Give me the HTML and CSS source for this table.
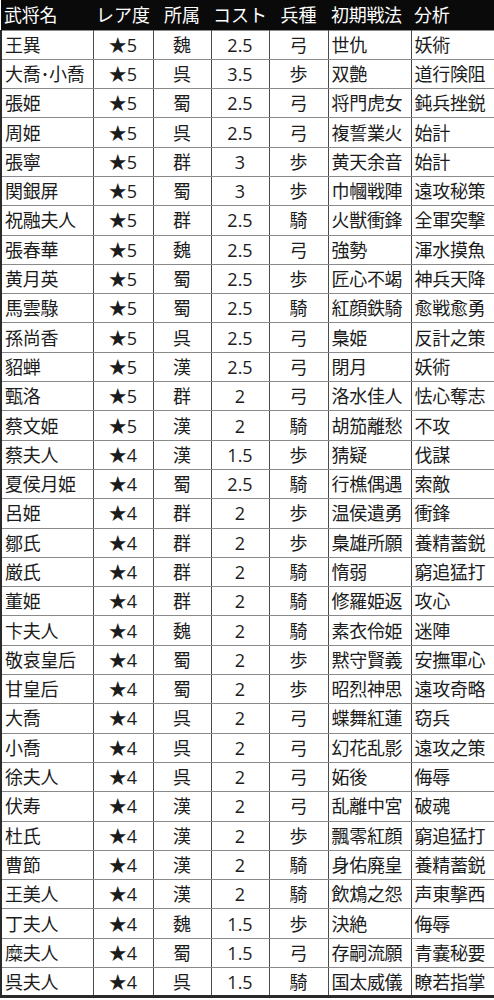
FILE: index.html
```html
<!DOCTYPE html>
<html lang="ja">
<head>
<meta charset="utf-8">
<link rel="stylesheet" href="styles.css">
</head>
<body>
<table class="tbl">
<colgroup>
<col class="c1"><col class="c2"><col class="c3"><col class="c4"><col class="c5"><col class="c6"><col class="c7">
</colgroup>
<thead>
<tr class="head"><th class="l">武将名</th><th>レア度</th><th>所属</th><th>コスト</th><th>兵種</th><th class="l">初期戦法</th><th class="l">分析</th></tr>
</thead>
<tbody>
<tr><td class="l">王異</td><td>★5</td><td>魏</td><td>2.5</td><td>弓</td><td class="l">世仇</td><td class="l">妖術</td></tr>
<tr><td class="l">大喬･小喬</td><td>★5</td><td>呉</td><td>3.5</td><td>歩</td><td class="l">双艶</td><td class="l">道行険阻</td></tr>
<tr><td class="l">張姫</td><td>★5</td><td>蜀</td><td>2.5</td><td>弓</td><td class="l">将門虎女</td><td class="l">鈍兵挫鋭</td></tr>
<tr><td class="l">周姫</td><td>★5</td><td>呉</td><td>2.5</td><td>弓</td><td class="l">複誓業火</td><td class="l">始計</td></tr>
<tr><td class="l">張寧</td><td>★5</td><td>群</td><td>3</td><td>歩</td><td class="l">黄天余音</td><td class="l">始計</td></tr>
<tr><td class="l">関銀屏</td><td>★5</td><td>蜀</td><td>3</td><td>歩</td><td class="l">巾幗戦陣</td><td class="l">遠攻秘策</td></tr>
<tr><td class="l">祝融夫人</td><td>★5</td><td>群</td><td>2.5</td><td>騎</td><td class="l">火獣衝鋒</td><td class="l">全軍突撃</td></tr>
<tr><td class="l">張春華</td><td>★5</td><td>魏</td><td>2.5</td><td>弓</td><td class="l">強勢</td><td class="l">渾水摸魚</td></tr>
<tr><td class="l">黄月英</td><td>★5</td><td>蜀</td><td>2.5</td><td>歩</td><td class="l">匠心不竭</td><td class="l">神兵天降</td></tr>
<tr><td class="l">馬雲騄</td><td>★5</td><td>蜀</td><td>2.5</td><td>騎</td><td class="l">紅顔鉄騎</td><td class="l">愈戦愈勇</td></tr>
<tr><td class="l">孫尚香</td><td>★5</td><td>呉</td><td>2.5</td><td>弓</td><td class="l">梟姫</td><td class="l">反計之策</td></tr>
<tr><td class="l">貂蝉</td><td>★5</td><td>漢</td><td>2.5</td><td>弓</td><td class="l">閉月</td><td class="l">妖術</td></tr>
<tr><td class="l">甄洛</td><td>★5</td><td>群</td><td>2</td><td>弓</td><td class="l">洛水佳人</td><td class="l">怯心奪志</td></tr>
<tr><td class="l">蔡文姫</td><td>★5</td><td>漢</td><td>2</td><td>騎</td><td class="l">胡笳離愁</td><td class="l">不攻</td></tr>
<tr><td class="l">蔡夫人</td><td>★4</td><td>漢</td><td>1.5</td><td>歩</td><td class="l">猜疑</td><td class="l">伐謀</td></tr>
<tr><td class="l">夏侯月姫</td><td>★4</td><td>蜀</td><td>2.5</td><td>騎</td><td class="l">行樵偶遇</td><td class="l">索敵</td></tr>
<tr><td class="l">呂姫</td><td>★4</td><td>群</td><td>2</td><td>歩</td><td class="l">温侯遺勇</td><td class="l">衝鋒</td></tr>
<tr><td class="l">鄒氏</td><td>★4</td><td>群</td><td>2</td><td>歩</td><td class="l">梟雄所願</td><td class="l">養精蓄鋭</td></tr>
<tr><td class="l">厳氏</td><td>★4</td><td>群</td><td>2</td><td>騎</td><td class="l">惰弱</td><td class="l">窮追猛打</td></tr>
<tr><td class="l">董姫</td><td>★4</td><td>群</td><td>2</td><td>騎</td><td class="l">修羅姫返</td><td class="l">攻心</td></tr>
<tr><td class="l">卞夫人</td><td>★4</td><td>魏</td><td>2</td><td>騎</td><td class="l">素衣伶姫</td><td class="l">迷陣</td></tr>
<tr><td class="l">敬哀皇后</td><td>★4</td><td>蜀</td><td>2</td><td>歩</td><td class="l">黙守賢義</td><td class="l">安撫軍心</td></tr>
<tr><td class="l">甘皇后</td><td>★4</td><td>蜀</td><td>2</td><td>歩</td><td class="l">昭烈神思</td><td class="l">遠攻奇略</td></tr>
<tr><td class="l">大喬</td><td>★4</td><td>呉</td><td>2</td><td>弓</td><td class="l">蝶舞紅蓮</td><td class="l">窃兵</td></tr>
<tr><td class="l">小喬</td><td>★4</td><td>呉</td><td>2</td><td>弓</td><td class="l">幻花乱影</td><td class="l">遠攻之策</td></tr>
<tr><td class="l">徐夫人</td><td>★4</td><td>呉</td><td>2</td><td>弓</td><td class="l">妬後</td><td class="l">侮辱</td></tr>
<tr><td class="l">伏寿</td><td>★4</td><td>漢</td><td>2</td><td>弓</td><td class="l">乱離中宮</td><td class="l">破魂</td></tr>
<tr><td class="l">杜氏</td><td>★4</td><td>漢</td><td>2</td><td>歩</td><td class="l">飄零紅顔</td><td class="l">窮追猛打</td></tr>
<tr><td class="l">曹節</td><td>★4</td><td>漢</td><td>2</td><td>騎</td><td class="l">身佑廃皇</td><td class="l">養精蓄鋭</td></tr>
<tr><td class="l">王美人</td><td>★4</td><td>漢</td><td>2</td><td>騎</td><td class="l">飲鴆之怨</td><td class="l">声東撃西</td></tr>
<tr><td class="l">丁夫人</td><td>★4</td><td>魏</td><td>1.5</td><td>歩</td><td class="l">決絶</td><td class="l">侮辱</td></tr>
<tr><td class="l">糜夫人</td><td>★4</td><td>蜀</td><td>1.5</td><td>弓</td><td class="l">存嗣流願</td><td class="l">青嚢秘要</td></tr>
<tr><td class="l">呉夫人</td><td>★4</td><td>呉</td><td>1.5</td><td>騎</td><td class="l">国太威儀</td><td class="l">瞭若指掌</td></tr>
</tbody>
</table>
</body>
</html>
```

FILE: styles.css
```css
html, body {
  margin: 0;
  padding: 0;
  background: #ffffff;
}

body {
  font-family: "Open Sans", "Noto Sans CJK JP", sans-serif;
  font-size: 18px;
  color: #1c1c1c;
}

.tbl {
  width: 494px;
  table-layout: fixed;
  border-collapse: collapse;
  border-bottom: 3px solid #2a2a2a;
}

.c1 { width: 92px; }
.c2 { width: 60px; }
.c3 { width: 58px; }
.c4 { width: 58px; }
.c5 { width: 59px; }
.c6 { width: 83px; }
.c7 { width: 84px; }

.tbl th,
.tbl td {
  padding: 0;
  text-align: center;
  white-space: nowrap;
  overflow: hidden;
  line-height: 1;
  font-weight: normal;
}

.tbl .l {
  text-align: left;
  padding-left: 3px;
  letter-spacing: -0.3px;
}

.head {
  height: 30px;
  background: #0a0a0a;
  color: #ffffff;
}

.head th {
  border: none;
}

.tbl tbody tr {
  height: 29.3px;
}

.tbl td {
  border-top: 1px solid #8a8a8a;
  border-bottom: 1px solid #8a8a8a;
  border-left: 1px solid #4a4a4a;
  border-right: 1px solid #4a4a4a;
}

.tbl td:first-child {
  border-left: 2px solid #2a2a2a;
}

.tbl td:last-child {
  border-right: 2px solid #2a2a2a;
}
```
